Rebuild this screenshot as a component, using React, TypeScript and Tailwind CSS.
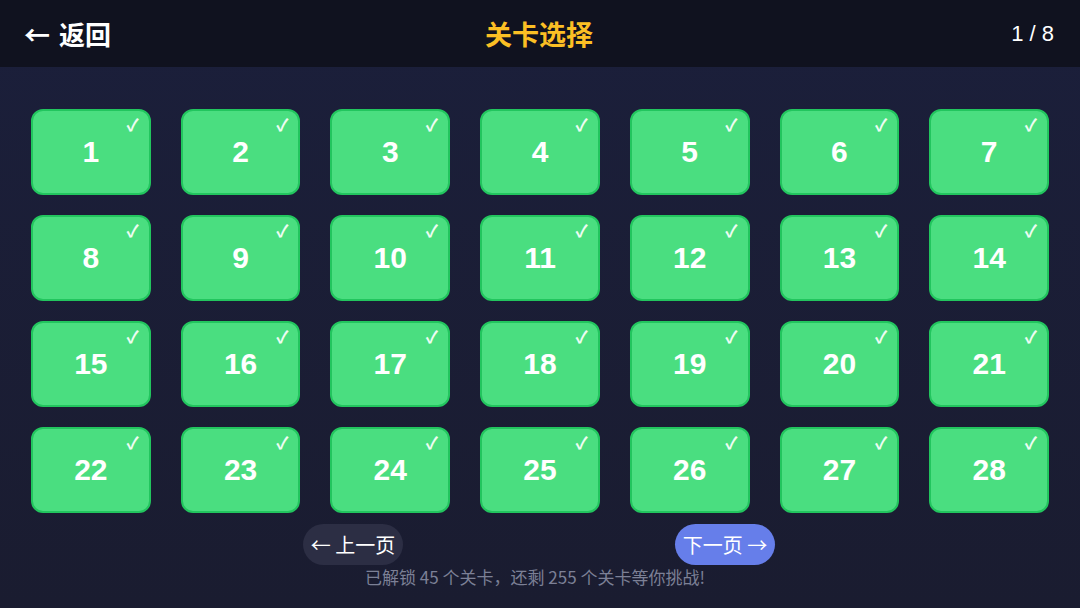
import React from 'react';

const levels = Array.from({ length: 28 }, (_, i) => i + 1);

const cjk = { fontFamily: '"Noto Sans CJK SC", "Liberation Sans", sans-serif' };

const LevelTile: React.FC<{ n: number }> = ({ n }) => (
  <button className="relative h-[86px] rounded-xl border-2 border-[#22c55e] bg-[#4ade80] flex items-center justify-center">
    <span className="text-[30px] font-bold text-white leading-none">{n}</span>
    <span className="absolute top-[6px] right-[10px] text-[17px] font-bold text-white/90 leading-none">✓</span>
  </button>
);

const App: React.FC = () => {
  return (
    <div
      className="w-[1080px] h-[608px] flex flex-col bg-gradient-to-b from-[#1b1f3b] to-[#1a1c30] text-white overflow-hidden"
      style={{ fontFamily: '"Liberation Sans", Arial, "Noto Sans CJK SC", sans-serif' }}
    >
      <header className="h-[67px] shrink-0 bg-[#10121f] flex items-center justify-between pl-[24px] pr-[26px]">
        <button className="w-[140px] flex items-center gap-[9px] text-[26px] font-bold text-white leading-none" style={cjk}>
          <span>←</span>
          <span>返回</span>
        </button>
        <h1 className="text-[27px] font-bold text-[#fbbf24] leading-none" style={cjk}>
          关卡选择
        </h1>
        <span className="w-[140px] text-right text-[22px] text-white">1 / 8</span>
      </header>

      <main className="flex-1 flex flex-col px-[31px] pt-[42px]">
        <div className="grid grid-cols-7 gap-x-[30px] gap-y-[20px]">
          {levels.map((n) => (
            <LevelTile key={n} n={n} />
          ))}
        </div>

        <div className="mt-[11px] flex justify-center gap-[272px] pr-[2px]" style={cjk}>
          <button className="h-[41px] w-[100px] rounded-full bg-[#2c2e44] text-[20px] text-white leading-none">
            ← 上一页
          </button>
          <button className="h-[41px] w-[100px] rounded-full bg-[#667eea] text-[20px] text-white leading-none">
            下一页 →
          </button>
        </div>

        <p className="mt-[3px] text-center text-[17px] font-normal text-[#7c8096] leading-none pr-[10px]" style={cjk}>
          已解锁 45 个关卡，还剩 255 个关卡等你挑战!
        </p>
      </main>
    </div>
  );
};

export default App;
